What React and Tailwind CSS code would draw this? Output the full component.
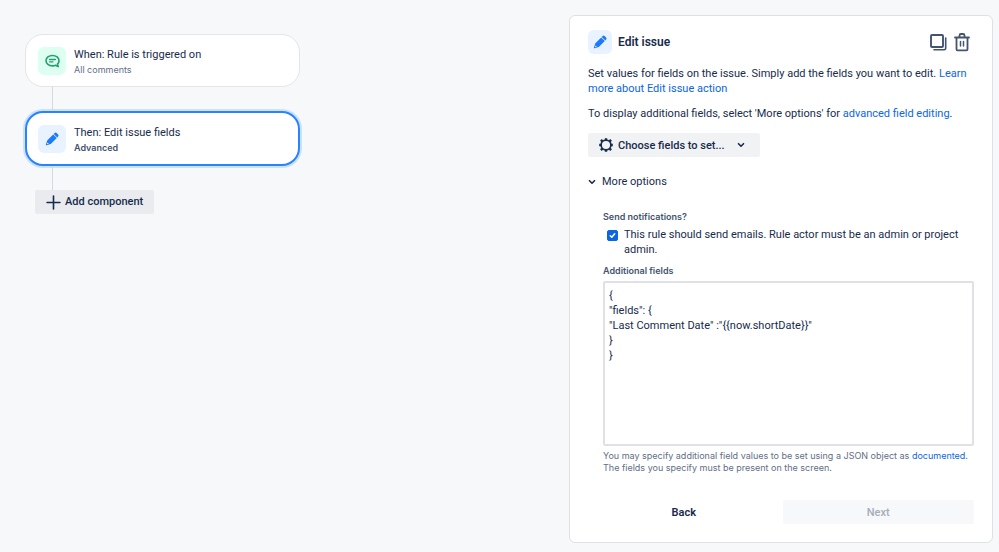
import React, { useState } from 'react';

const PencilIcon = ({ className }) => (
  <svg viewBox="0 0 16 16" fill="currentColor" className={className} aria-hidden="true">
    <path d="M9.200 3.500 3.400 9.300a1 1 0 0 0-.25.4L1.900 13.500c-.15.500.3.950.8.800l3.900-1.200a1 1 0 0 0 .4-.25l5.800-5.800z" />
    <path d="m9.700 3 .9-.9a1.400 1.400 0 0 1 2 0l1.500 1.500a1.400 1.400 0 0 1 0 2l-.9.900z" />
    <path d="m3.400 11.400 1.400 1.400-1.300.4-.5-.5z" fill="#e9f2ff" />
  </svg>
);

const CommentIcon = ({ className }) => (
  <svg viewBox="0 0 15 14" fill="none" stroke="currentColor" strokeWidth="1.600" strokeLinecap="round" strokeLinejoin="round" className={className} aria-hidden="true">
    <path d="M10.600 11.300c-.9.400-2 .6-3.100.6C3.900 11.900 1 9.700 1 6.700S3.900 1.500 7.500 1.500 14 3.700 14 6.700c0 1.300-.6 2.500-1.500 3.400l.7 2.500z" />
    <path d="M4.500 5.500h6M4.500 7.800h3.500" strokeWidth="1.300" />
  </svg>
);

const CopyIcon = ({ className }) => (
  <svg viewBox="0 0 18 18" fill="none" stroke="currentColor" strokeWidth="1.900" strokeLinejoin="round" className={className} aria-hidden="true">
    <rect x="2" y="2" width="12" height="12" rx="1" />
    <path d="M16.700 5V15.200a1.500 1.500 0 0 1-1.500 1.500H5" strokeWidth="1.600" strokeLinecap="round" />
  </svg>
);

const TrashIcon = ({ className }) => (
  <svg viewBox="0 0 18 20" fill="none" stroke="currentColor" strokeWidth="1.800" strokeLinejoin="round" strokeLinecap="round" className={className} aria-hidden="true">
    <path d="M2 5.500h14M6.500 5V3.500A1.500 1.500 0 0 1 8 2h2a1.500 1.500 0 0 1 1.500 1.500V5" />
    <path d="M3.500 6v11.300a1 1 0 0 0 1 1h9a1 1 0 0 0 1-1V6" />
    <path d="M7.500 9.500v4.500M10.500 9.500v4.500" strokeWidth="1.500" />
  </svg>
);

const GearIcon = ({ className }) => (
  <svg viewBox="0 0 14 14" fill="none" stroke="currentColor" className={className} aria-hidden="true">
    <circle cx="7" cy="7" r="4.900" strokeWidth="1.700" />
    <path
      d="M7 .2v1.800M7 12v1.800M.2 7H2M12 7h1.800M1.900 1.900l1.500 1.500M10.600 10.600l1.500 1.500M1.900 12.100l1.500-1.500M10.600 3.400l1.500-1.500"
      strokeWidth="2.400"
    />
  </svg>
);

const ChevronIcon = ({ className }) => (
  <svg viewBox="0 0 8 8" fill="none" stroke="currentColor" strokeWidth="1.600" strokeLinecap="round" strokeLinejoin="round" className={className} aria-hidden="true">
    <path d="m1.500 2.700 2.500 2.500 2.500-2.500" />
  </svg>
);

const PlusIcon = ({ className }) => (
  <svg viewBox="0 0 14 14" fill="none" stroke="currentColor" strokeWidth="1.500" strokeLinecap="round" className={className} aria-hidden="true">
    <path d="M7 1v12M1 7h12" />
  </svg>
);

const Link = ({ children }) => (
  <a href="#docs" className="text-[#0c66e4] hover:underline">{children}</a>
);

const Connector = ({ className }) => <div className={`ml-[27px] w-px bg-[#d5d8dd] ${className}`} />;

const fieldsJson = `{
"fields": {
"Last Comment Date" :"{{now.shortDate}}"
}
}`;

const RuleChain = () => (
  <section className="w-[275px] shrink-0 pt-[19px]">
    <button type="button" className="flex h-[53px] w-full items-center gap-2 rounded-[18px] border border-[#e3e5e9] bg-white px-3 text-left">
      <span className="flex size-7 items-center justify-center rounded-md bg-[#dcfff1] text-[#22a06b]">
        <CommentIcon className="h-3.5 w-[15px]" />
      </span>
      <span className="pt-0.5">
        <span className="block text-[11px] leading-4">When: Rule is triggered on</span>
        <span className="block font-['Inter',sans-serif] text-[9px] leading-[13px] text-[#626f86]">All comments</span>
      </span>
    </button>

    <Connector className="h-6" />

    <button type="button" className="flex h-[55px] w-full items-center gap-2 rounded-[18px] border-2 border-[#2684ff] bg-white px-[11px] text-left ring-2 ring-[#cce0ff]">
      <span className="flex size-7 items-center justify-center rounded-md bg-[#e9f2ff] text-[#1d7afc]">
        <PencilIcon className="size-4" />
      </span>
      <span className="pt-0.5">
        <span className="block text-[11px] leading-4">Then: Edit issue fields</span>
        <span className="block font-['Inter',sans-serif] text-[9px] leading-[13px] font-semibold text-[#44546f]">Advanced</span>
      </span>
    </button>

    <Connector className="h-6" />

    <button type="button" className="ml-2.5 flex h-6 items-center gap-1 rounded-[2px] bg-[#e9ebee] px-[11px] text-[11px] font-medium">
      <PlusIcon className="size-[15px]" />
      Add component
    </button>
  </section>
);

const EditIssuePanel = () => {
  const [open, setOpen] = useState(true);
  const [notify, setNotify] = useState(true);
  const [fields, setFields] = useState(fieldsJson);

  return (
    <section className="w-[424px] rounded-md border border-[#dfe1e6] bg-white px-[18px] pt-3.5 pb-[18px] text-[11px] leading-[15px]">
      <header className="flex items-center justify-between">
        <div className="flex items-center gap-1.5">
          <span className="flex size-6 items-center justify-center rounded-md bg-[#e9f2ff] text-[#1d7afc]">
            <PencilIcon className="size-4" />
          </span>
          <h1 className="text-[12px] font-semibold">Edit issue</h1>
        </div>
        <div className="flex items-center gap-1.5 pr-[3px] text-[#44546f]">
          <button type="button" aria-label="Duplicate"><CopyIcon className="size-[18px]" /></button>
          <button type="button" aria-label="Delete"><TrashIcon className="h-5 w-[18px]" /></button>
        </div>
      </header>

      <p className="mt-3">
        Set values for fields on the issue. Simply add the fields you want to edit. <Link>Learn more about Edit issue action</Link>
      </p>
      <p className="mt-2.5">
        To display additional fields, select 'More options' for <Link>advanced field editing</Link>.
      </p>

      <button type="button" className="mt-3 flex h-6 items-center rounded-[2px] bg-[#f1f2f4] px-[11px] font-medium">
        <GearIcon className="mr-[5px] size-3.5" />
        Choose fields to set...
        <ChevronIcon className="mr-1 ml-3 size-2" />
      </button>

      <button type="button" onClick={() => setOpen(!open)} aria-expanded={open} className="mt-[17px] flex items-center gap-1.5">
        <ChevronIcon className="size-2" />
        More options
      </button>

      {open && (
        <div className="mt-[22px] pl-[15px]">
          <p className="font-['Inter',sans-serif] text-[9px] leading-3 font-semibold text-[#44546f]">Send notifications?</p>
          <label className="mt-1 flex gap-1.5 pl-1">
            <span className="relative mt-[3px] flex size-[11px] shrink-0">
              <input
                type="checkbox"
                checked={notify}
                onChange={(e) => setNotify(e.target.checked)}
                className="peer size-[11px] appearance-none rounded-[2px] border border-[#8590a2] bg-white checked:border-[#0c66e4] checked:bg-[#0c66e4]"
              />
              <svg viewBox="0 0 11 11" fill="none" stroke="#fff" strokeWidth="1.500" strokeLinecap="round" strokeLinejoin="round" className="pointer-events-none absolute inset-0 hidden peer-checked:block" aria-hidden="true">
                <path d="m3.300 5.700 1.500 1.500 2.900-3.400" />
              </svg>
            </span>
            <span>This rule should send emails. Rule actor must be an admin or project admin.</span>
          </label>

          <label htmlFor="additional-fields" className="mt-2 block font-['Inter',sans-serif] text-[9px] leading-3 font-semibold text-[#44546f]">Additional fields</label>
          <textarea
            id="additional-fields"
            rows={10}
            spellCheck={false}
            value={fields}
            onChange={(e) => setFields(e.target.value)}
            className="mt-1 block w-full resize-none rounded-[2px] border-2 border-[#dfe1e6] bg-white px-1 pt-[5px] pb-1.5 focus:outline-none focus:border-[#388bff]"
          />
          <p className="mt-1 font-['Inter',sans-serif] text-[9px] leading-3 text-[#626f86]">
            You may specify additional field values to be set using a JSON object as <Link>documented</Link>. The fields you specify must be present on the screen.
          </p>
        </div>
      )}

      <footer className="mt-[26px] grid grid-cols-2 gap-[3px]">
        <button type="button" className="h-6 rounded-[2px] font-semibold">Back</button>
        <button type="button" disabled className="h-6 rounded-[2px] bg-[#f7f8f9] font-medium text-[#a5adba]">Next</button>
      </footer>
    </section>
  );
};

export default function App() {
  return (
    <main className="flex min-h-screen items-start justify-between bg-[#f7f8f9] pt-[15px] pr-1.5 pb-2 pl-[25px] font-['Roboto',sans-serif] text-[#172b4d]">
      <RuleChain />
      <EditIssuePanel />
    </main>
  );
}
